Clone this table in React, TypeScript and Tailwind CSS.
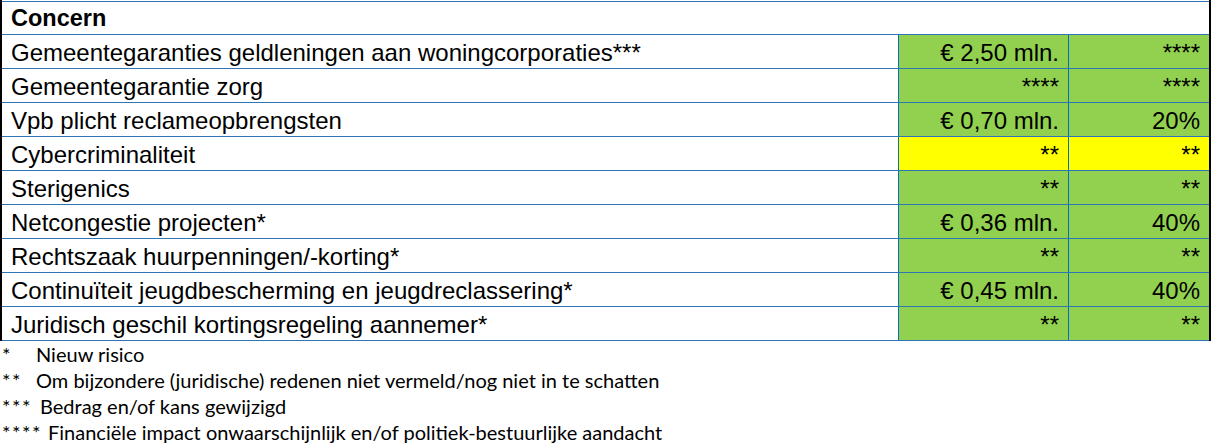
const rows: { label: string; a: string; b: string; yellow?: boolean }[] = [
  { label: 'Gemeentegaranties geldleningen aan woningcorporaties***', a: '€ 2,50 mln.', b: '****' },
  { label: 'Gemeentegarantie zorg', a: '****', b: '****' },
  { label: 'Vpb plicht reclameopbrengsten', a: '€ 0,70 mln.', b: '20%' },
  { label: 'Cybercriminaliteit', a: '**', b: '**', yellow: true },
  { label: 'Sterigenics', a: '**', b: '**' },
  { label: 'Netcongestie projecten*', a: '€ 0,36 mln.', b: '40%' },
  { label: 'Rechtszaak huurpenningen/-korting*', a: '**', b: '**' },
  { label: 'Continuïteit jeugdbescherming en jeugdreclassering*', a: '€ 0,45 mln.', b: '40%' },
  { label: 'Juridisch geschil kortingsregeling aannemer*', a: '**', b: '**' },
]

const notes = [
  { mark: '*', text: 'Nieuw risico', w: 'w-[34px]' },
  { mark: '**', text: 'Om bijzondere (juridische) redenen niet vermeld/nog niet in te schatten', w: 'w-[34px]' },
  { mark: '***', text: 'Bedrag en/of kans gewijzigd', w: 'w-[38px]' },
  { mark: '****', text: 'Financiële impact onwaarschijnlijk en/of politiek-bestuurlijke aandacht', w: 'w-[46px]' },
]

export default function App() {
  return (
    <div className="w-[1211px] h-[447px] bg-white overflow-hidden text-black">
      <div className="w-[1211px] pt-px border-l-2 border-r-2 border-black font-['Liberation_Sans',Arial,sans-serif] text-[24px] leading-none">
        <div className="h-[34px] border-t border-b border-[#2e75b6] flex items-center pt-[2px] pl-[9px] font-bold text-[23.5px]">
          Concern
        </div>
        {rows.map((r) => (
          <div key={r.label} className="grid grid-cols-[896px_170px_141px] h-[34px] border-b border-[#2e75b6]">
            <div className="flex items-center pt-[2px] pl-[9px] whitespace-nowrap">{r.label}</div>
            <div className={`flex items-center justify-end pt-[2px] pr-[9px] border-l border-[#0070c0] ${r.yellow ? 'bg-[#ffff00]' : 'bg-[#92d050]'}`}>
              {r.a}
            </div>
            <div className={`flex items-center justify-end pt-[2px] pr-[9px] border-l border-[#0070c0] ${r.yellow ? 'bg-[#ffff00]' : 'bg-[#92d050]'}`}>
              {r.b}
            </div>
          </div>
        ))}
      </div>
      <div className="font-['Lato','Open_Sans',sans-serif] text-[20px] leading-[26px] pl-[2px]">
        {notes.map((n) => (
          <div key={n.mark} className="flex h-[26px] items-center whitespace-nowrap">
            <span className={`${n.w} shrink-0 tracking-[1.5px]`}>{n.mark}</span>
            <span>{n.text}</span>
          </div>
        ))}
      </div>
    </div>
  )
}
